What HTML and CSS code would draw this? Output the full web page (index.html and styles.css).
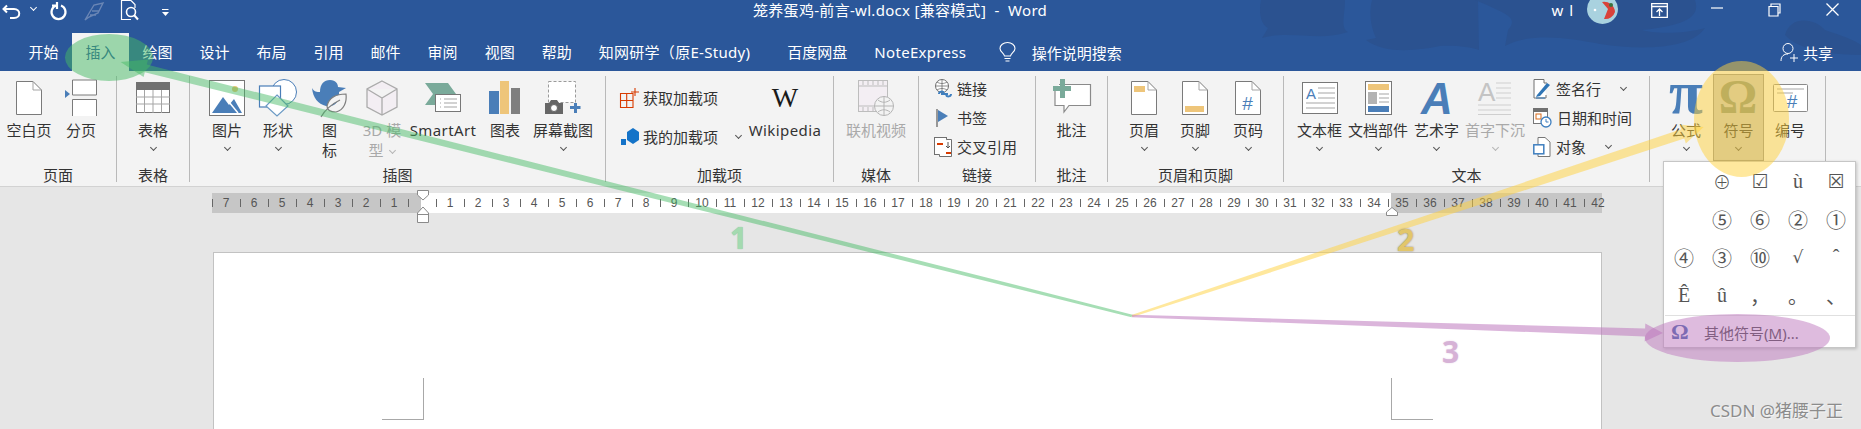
FILE: index.html
```html
<!DOCTYPE html>
<html lang="zh-CN">
<head>
<meta charset="utf-8">
<title>Word</title>
<link rel="stylesheet" href="styles.css">
</head>
<body>
<div class="app">
  <header class="head">
    <svg class="head-bg" width="1861" height="71" viewBox="0 0 1861 71"><path d="M1261 0C1258 15 1262 25 1268 28L1262 38C1290 30 1320 42 1348 32C1340 28 1345 15 1345 0Z"/><path d="M1372 0C1368 15 1372 30 1376 38L1366 40C1385 55 1420 50 1440 46C1455 45 1470 47 1479 50L1478 0Z"/><path d="M1475 0C1510 15 1518 18 1508 30L1505 46C1530 32 1570 38 1600 44C1640 50 1690 50 1705 28C1680 35 1650 33 1642 30C1690 25 1700 15 1695 0Z"/><path d="M1785 35C1790 15 1815 18 1825 30C1840 35 1855 40 1861 45V55C1840 55 1800 52 1785 35Z"/></svg>
    <div class="titlebar">
      <div class="qat">
        <svg class="q-undo" width="20" height="16" viewBox="0 0 20 16"><path d="M5 1.5L1.5 5L5 8.5M2 5H12C19 5 19 14 12 14H8" fill="none" stroke="#fff" stroke-width="2"/></svg>
        <i class="chev chev-w q-c1"></i>
        <svg class="q-redo" width="17" height="18" viewBox="0 0 17 18"><path d="M6 3.5A7 7 0 1 0 11 3.5M7 0V7M2 3.5H7" fill="none" stroke="#fff" stroke-width="2.2"/></svg>
        <svg class="q-pen" width="20" height="18" viewBox="0 0 20 18"><path d="M1 17L10 2L19 0L14 10L5 14ZM8 8H15M6 12H12" fill="none" stroke="#6a86b5" stroke-width="1.4"/></svg>
        <svg class="q-prev" width="19" height="21" viewBox="0 0 19 21"><path d="M11 .5H1.5V19.5H11M11 .5L15 4.5V8" fill="none" stroke="#fff" stroke-width="1.2"/><circle cx="11" cy="12" r="4.5" fill="none" stroke="#fff" stroke-width="1.6"/><path d="M14 15L18 19.5" stroke="#fff" stroke-width="2"/></svg>
        <svg class="q-more" width="7" height="8" viewBox="0 0 7 8"><path d="M0 .5H6.5" stroke="#fff"/><path d="M0 3H7L3.5 7Z" fill="#fff"/></svg>
      </div>
      <div class="doc-title">笼养蛋鸡-前言-wl.docx [兼容模式]&nbsp; -&nbsp; Word</div>
      <div class="win">
        <span class="win-user">w l</span>
        <svg class="win-avatar" width="31" height="24" viewBox="0 0 31 24"><ellipse cx="15.5" cy="9" rx="15.5" ry="15" fill="#a9d2df"/><path d="M15 2A11 11 0 0 1 28 12A10 10 0 0 1 17 19L21 9Z" fill="#d9423a"/><circle cx="24" cy="5" r="2" fill="#39733f"/><circle cx="8" cy="10" r="1.3" fill="#fff"/></svg>
        <svg class="win-disp" width="17" height="15" viewBox="0 0 17 15"><path d="M.7.7H16.3V14.3H.7ZM.7 3.5H16.3M8.5 13V6M5.5 9L8.5 6L11.5 9" fill="none" stroke="#fff" stroke-width="1.3"/></svg>
        <svg class="win-min" width="12" height="8" viewBox="0 0 12 8"><path d="M0 4H12" stroke="#fff" stroke-width="1.2"/></svg>
        <svg class="win-res" width="13" height="14" viewBox="0 0 13 14"><path d="M3 3V1H12V10H10M1 3.5H10V13H1Z" fill="none" stroke="#fff" stroke-width="1.2"/></svg>
        <svg class="win-close" width="13" height="13" viewBox="0 0 13 13"><path d="M.5.5L12.5 12.5M12.5.5L.5 12.5" stroke="#fff" stroke-width="1.3"/></svg>
      </div>
    </div>
    <nav class="tabs">
      <span class="tab">开始</span>
      <span class="tab tab-on">插入</span>
      <span class="tab">绘图</span>
      <span class="tab">设计</span>
      <span class="tab">布局</span>
      <span class="tab">引用</span>
      <span class="tab">邮件</span>
      <span class="tab">审阅</span>
      <span class="tab">视图</span>
      <span class="tab">帮助</span>
      <span class="tab tab-wide">知网研学（原E-Study)</span>
      <span class="tab">百度网盘</span>
      <span class="tab tab-latin">NoteExpress</span>
      <svg class="bulb" width="17" height="20" viewBox="0 0 17 20"><path d="M5.5 14C5 11 1 10 1 6.500A7.500 6 0 0 1 16 6.500C16 10 12 11 11.500 14ZM5.500 16.500H11.500M6.500 19H10.500" fill="none" stroke="#fff" stroke-width="1.100"/></svg>
      <span class="tell">操作说明搜索</span>
      <span class="share">
        <svg width="18" height="19" viewBox="0 0 18 19"><circle cx="8" cy="5.500" r="5" fill="none" stroke="#fff"/><path d="M1 18C1 13 4 11 8 11M10 15H18M14 11V19" fill="none" stroke="#fff"/></svg>
        共享
      </span>
    </nav>
  </header>

  <section class="ribbon">
    <div class="grp grp-page">
      <div class="body cols-page">
        <div class="btn"><span class="ico"><svg width="26" height="34" viewBox="0 0 26 34"><path class="pg" d="M.5.5H17L25.500 9V33.500H.5Z"/><path class="ln" d="M17 .5V9H25.500"/></svg></span><span class="lbl">空白页</span></div>
        <div class="btn"><span class="ico"><svg width="32" height="36" viewBox="0 0 32 36"><path class="pg" d="M7.500 0V15H31.500V0ZM7.500 36V19.500H31.500V36"/><path d="M0 10V18L5 14Z" fill="#4a7eb8"/></svg></span><span class="lbl">分页</span></div>
      </div>
      <div class="glabel">页面</div>
    </div>
    <div class="grp grp-table">
      <div class="body">
        <div class="btn"><span class="ico"><svg width="34" height="32" viewBox="0 0 34 32"><rect x=".5" y=".5" width="33" height="30" fill="#fff" stroke="#777"/><rect width="34" height="8" fill="#707070"/><path class="ln" d="M0 15H34M0 22H34M8.500 8V31M17 8V31M25.500 8V31"/></svg></span><span class="lbl">表格</span><i class="chev"></i></div>
      </div>
      <div class="glabel">表格</div>
    </div>
    <div class="grp grp-illus">
      <div class="body cols-illus">
        <div class="btn"><span class="ico"><svg width="36" height="36" viewBox="0 0 36 36"><rect x=".5" y=".5" width="35" height="35" fill="#fff" stroke="#777"/><path d="M3 33L14 17L20 25L25 19L33 33Z" fill="#4a7eb8"/><path d="M20 22L29 33" stroke="#fff" stroke-width="1.500"/><circle cx="26" cy="9" r="3" fill="#f0c674"/></svg></span><span class="lbl">图片</span><i class="chev"></i></div>
        <div class="btn"><span class="ico"><svg width="38" height="38" viewBox="0 0 38 38"><circle cx="25" cy="13" r="12.500" fill="#fff" stroke="#4a7eb8"/><rect x=".5" y="7" width="21" height="21" fill="#fff" stroke="#4a7eb8" stroke-width="1.200"/><path d="M18 16L29 27L18 37L7 27Z" fill="#fff" stroke="#6b9ac4" stroke-width="1.200"/></svg></span><span class="lbl">形状</span><i class="chev"></i></div>
        <div class="btn"><span class="ico"><svg width="36" height="40" viewBox="0 0 36 40"><path d="M0 10C2 14 5 14 8 14C8 6 12 2 18 2C24 2 26 6 26 9L34 10L27 14C28 24 22 30 14 28C6 26 1 20 0 10Z" fill="#4a7eb8"/><path d="M34 16C24 16 17 20 15 28C15 32 18 34 24 34C32 32 35 24 34 16ZM9 39C14 30 20 26 28 22" fill="#f3f3f3" stroke="#7f7f7f" stroke-width="1.200"/></svg></span><span class="lbl lbl-wrap">图<br>标</span></div>
        <div class="btn btn-off"><span class="ico"><svg width="32" height="36" viewBox="0 0 32 36"><path d="M16 1L31 9V27L16 35L1 27V9ZM1 9L16 18L31 9M16 18V35" fill="#f3eef3" stroke="#ababab" stroke-width="1.300"/></svg></span><span class="lbl lbl-wrap">3D 模<br>型 <i class="chev chev-in"></i></span></div>
        <div class="btn"><span class="ico"><svg width="38" height="30" viewBox="0 0 38 30"><path d="M1 0H24L32 11L24 22H1L9 11Z" fill="#7aaa9a"/><rect x="11.500" y="11.500" width="25" height="17" fill="#fff" stroke="#777"/><path class="ln" d="M16 16H17M16 20H17M16 24H17M20 16H33M20 20H33M20 24H33"/></svg></span><span class="lbl lbl-latin">SmartArt</span></div>
        <div class="btn"><span class="ico"><svg width="32" height="34" viewBox="0 0 32 34"><rect y="10" width="10" height="23" fill="#4a7eb8"/><rect x="11" width="9" height="33" fill="#eec57a"/><rect x="22" y="7" width="9" height="26" fill="#7f7f7f"/></svg></span><span class="lbl">图表</span></div>
        <div class="btn"><span class="ico"><svg width="36" height="34" viewBox="0 0 36 34"><rect x="3.500" y=".5" width="27" height="21" fill="#fff" stroke="#9a9a9a" stroke-dasharray="3 2"/><path d="M0 33V22H4L6 19H12L14 22H18V33Z" fill="#666"/><circle cx="9" cy="27" r="3.500" fill="#fff" stroke="#666"/><path d="M25 26.500H35.500M30.500 22V32" stroke="#4a7eb8" stroke-width="3"/></svg></span><span class="lbl">屏幕截图</span><i class="chev"></i></div>
      </div>
      <div class="glabel">插图</div>
    </div>
    <div class="grp grp-addin">
      <div class="body cols-addin">
        <div class="small small-addin">
          <div class="row"><svg width="20" height="20" viewBox="0 0 20 20"><path d="M.5 5.500H13V19.500H.5ZM.5 12.500H13M6.700 5.500V19.500M15 0V8M11 4H19" fill="none" stroke="#d83b01" stroke-width="1.100"/></svg><span>获取加载项</span></div>
          <div class="row"><svg width="20" height="20" viewBox="0 0 20 20"><path d="M7 5L13 1L19 5V13L13 17L7 13Z" fill="#1473c8"/><path d="M1 12H6V18H1Z" fill="#1473c8"/></svg><span>我的加载项</span><i class="chev chev-row"></i></div>
        </div>
        <div class="btn"><span class="ico"><span class="wiki">W</span></span><span class="lbl lbl-latin">Wikipedia</span></div>
      </div>
      <div class="glabel">加载项</div>
    </div>
    <div class="grp grp-media">
      <div class="body">
        <div class="btn btn-off"><span class="ico"><svg width="36" height="36" viewBox="0 0 36 36"><rect x=".5" y=".5" width="29" height="31" fill="#f3eef3" stroke="#bdbdbd"/><path d="M.5 6H29.500M.5 26H29.500M5 1V5M10 1V5M15 1V5M20 1V5M25 1V5M5 27V31M10 27V31M15 27V31M20 27V31" stroke="#bdbdbd" fill="none"/><circle cx="26" cy="26" r="9.500" fill="#f3f3f3" stroke="#b5b5b5"/><path d="M16.500 26H35.500M26 16.500V35.500M20 20C24 23 28 23 32 20M20 32C24 29 28 29 32 32" fill="none" stroke="#b5b5b5"/></svg></span><span class="lbl">联机视频</span></div>
      </div>
      <div class="glabel">媒体</div>
    </div>
    <div class="grp grp-link">
      <div class="body">
        <div class="small small-link">
          <div class="row"><svg width="18" height="20" viewBox="0 0 18 20"><circle cx="8" cy="7" r="6.500" fill="#fff" stroke="#707070"/><path d="M1.500 7H14.500M8 .5V13.500M3 3C6 5 10 5 13 3M3 11C6 9 10 9 13 11" fill="none" stroke="#707070" stroke-width=".8"/><path d="M5 15C5 12 9 12 10 14M17 15C17 18 13 18 12 16M7 15H14" fill="none" stroke="#3f7fbf" stroke-width="2"/></svg><span>链接</span></div>
          <div class="row"><svg width="18" height="20" viewBox="0 0 18 20"><path d="M3 1V19" stroke="#707070" stroke-width="1.400"/><path d="M4 2L14 8L4 14Z" fill="#4a7eb8"/></svg><span>书签</span></div>
          <div class="row"><svg width="18" height="20" viewBox="0 0 18 20"><rect x=".5" y=".5" width="12" height="17" fill="#fff" stroke="#707070"/><path d="M12.500 2.500H17.500V19.500H5.500V17.500" fill="#fff" stroke="#707070"/><path d="M3 7H9" stroke="#d83b01" stroke-width="2"/><path d="M12 16H17" stroke="#d83b01" stroke-width="2"/><path d="M14 5V11M12 9L14 11L16 9" fill="none" stroke="#555"/></svg><span>交叉引用</span></div>
        </div>
      </div>
      <div class="glabel">链接</div>
    </div>
    <div class="grp grp-comment">
      <div class="body">
        <div class="btn"><span class="ico"><svg width="38" height="38" viewBox="0 0 38 38"><path d="M6 5.500H37.500V26.500H16L11 33V26.500H2V10" fill="#fff" stroke="#8a8a8a" stroke-width="1.200"/><path d="M7 0H12V7H18V12H12V19H7V12H0V7H7Z" fill="#7aaa9a"/></svg></span><span class="lbl">批注</span></div>
      </div>
      <div class="glabel">批注</div>
    </div>
    <div class="grp grp-hf">
      <div class="body cols-hf">
        <div class="btn"><span class="ico"><svg width="26" height="34" viewBox="0 0 26 34"><path class="pg" d="M.5.5H17L25.500 9V33.500H.5Z"/><path class="ln" d="M17 .5V9H25.500"/><rect x="3" y="5" width="11" height="6" fill="#eec57a"/></svg></span><span class="lbl">页眉</span><i class="chev"></i></div>
        <div class="btn"><span class="ico"><svg width="26" height="34" viewBox="0 0 26 34"><path class="pg" d="M.5.5H17L25.500 9V33.500H.5Z"/><path class="ln" d="M17 .5V9H25.500"/><rect x="3" y="25" width="19" height="6" fill="#eec57a"/></svg></span><span class="lbl">页脚</span><i class="chev"></i></div>
        <div class="btn"><span class="ico"><svg width="26" height="34" viewBox="0 0 26 34"><path class="pg" d="M.5.5H17L25.500 9V33.500H.5Z"/><path class="ln" d="M17 .5V9H25.500"/><text x="12.500" y="29" class="glyph-hash">#</text></svg></span><span class="lbl">页码</span><i class="chev"></i></div>
      </div>
      <div class="glabel">页眉和页脚</div>
    </div>
    <div class="grp grp-text">
      <div class="body cols-text">
        <div class="btn"><span class="ico"><svg width="36" height="32" viewBox="0 0 36 32"><rect x=".5" y=".5" width="35" height="31" fill="#fff" stroke="#777"/><text x="4" y="17" class="glyph-a">A</text><path class="ln" d="M16 6H33M16 11H33M16 16H33M4 21H33M4 26H33"/></svg></span><span class="lbl">文本框</span><i class="chev"></i></div>
        <div class="btn"><span class="ico"><svg width="27" height="34" viewBox="0 0 27 34"><rect x=".5" y=".5" width="26" height="33" fill="#fff" stroke="#777"/><rect x="3" y="3" width="21" height="6" fill="#eec57a"/><rect x="3" y="11" width="9" height="12" fill="#b3b3b3"/><path class="ln" d="M14 13H24M14 17H24M14 21H24"/><rect x="3" y="25" width="21" height="6" fill="#4a7eb8"/></svg></span><span class="lbl">文档部件</span><i class="chev"></i></div>
        <div class="btn"><span class="ico"><svg width="40" height="36" viewBox="0 0 40 36"><text x="20" y="34" class="glyph-art">A</text></svg></span><span class="lbl">艺术字</span><i class="chev"></i></div>
        <div class="btn btn-off"><span class="ico"><svg width="34" height="34" viewBox="0 0 34 34"><text x="0" y="20" class="glyph-cap">A</text><path d="M18 2H33M18 7H33M18 12H33M18 17H33M0 24H33M0 29H33M0 33.500H33" stroke="#cfcfcf" fill="none"/></svg></span><span class="lbl">首字下沉</span><i class="chev"></i></div>
        <div class="small small-text">
          <div class="row"><svg width="18" height="20" viewBox="0 0 18 20"><path d="M11 .5H1V19H13V16" fill="#fff" stroke="#707070"/><path d="M11 .5V4H14" fill="none" stroke="#707070"/><path d="M4 16L14 4L17 6L7 17L3 18Z" fill="#2f75b5"/><path d="M3 19H12" stroke="#2f75b5"/></svg><span>签名行</span><i class="chev chev-row"></i></div>
          <div class="row"><svg width="19" height="20" viewBox="0 0 19 20"><rect x=".5" y=".5" width="14" height="15" fill="#fff" stroke="#777"/><rect x="0" y="0" width="15" height="4" fill="#707070"/><rect x="3" y="6" width="5" height="5" fill="none" stroke="#d86b1a"/><circle cx="13" cy="14" r="5" fill="#fff" stroke="#3f7fbf" stroke-width="1.300"/><path d="M13 11V14H15.500" fill="none" stroke="#3f7fbf"/></svg><span>日期和时间</span></div>
          <div class="row"><svg width="18" height="20" viewBox="0 0 18 20"><path d="M5 .5H12L17 5V19.500H5Z" fill="#fff" stroke="#777"/><rect x=".8" y="7.800" width="10" height="9" fill="#fff" stroke="#3f7fbf" stroke-width="1.500"/></svg><span>对象</span><i class="chev chev-row"></i></div>
        </div>
      </div>
      <div class="glabel">文本</div>
    </div>
    <div class="grp grp-sym">
      <div class="body cols-sym">
        <div class="btn"><span class="ico"><svg width="40" height="38" viewBox="0 0 40 38"><text x="20" y="34" class="glyph-pi">π</text></svg></span><span class="lbl">公式</span><i class="chev"></i></div>
        <div class="btn btn-sel"><span class="ico"><svg width="40" height="36" viewBox="0 0 40 36"><text x="19" y="33" class="glyph-om">Ω</text></svg></span><span class="lbl">符号</span><i class="chev"></i></div>
        <div class="btn"><span class="ico"><svg width="35" height="28" viewBox="0 0 35 28"><rect x=".5" y=".5" width="34" height="27" rx="1" fill="#fff" stroke="#8a8a8a"/><path class="ln" d="M4 5H31M4 9H20"/><text x="19" y="24" class="glyph-hash">#</text></svg></span><span class="lbl">编号</span></div>
      </div>
    </div>
  </section>

  <main class="work">
    <div class="ruler">
      <span class="rc">7</span><span class="rc">6</span><span class="rc">5</span><span class="rc">4</span><span class="rc">3</span><span class="rc">2</span><span class="rc">1</span><span class="rc"></span>
      <span class="rc">1</span><span class="rc">2</span><span class="rc">3</span><span class="rc">4</span><span class="rc">5</span><span class="rc">6</span><span class="rc">7</span><span class="rc">8</span><span class="rc">9</span><span class="rc">10</span><span class="rc">11</span><span class="rc">12</span><span class="rc">13</span><span class="rc">14</span><span class="rc">15</span><span class="rc">16</span><span class="rc">17</span><span class="rc">18</span><span class="rc">19</span><span class="rc">20</span><span class="rc">21</span><span class="rc">22</span><span class="rc">23</span><span class="rc">24</span><span class="rc">25</span><span class="rc">26</span><span class="rc">27</span><span class="rc">28</span><span class="rc">29</span><span class="rc">30</span><span class="rc">31</span><span class="rc">32</span><span class="rc">33</span><span class="rc">34</span><span class="rc">35</span><span class="rc">36</span><span class="rc">37</span><span class="rc">38</span><span class="rc">39</span><span class="rc">40</span><span class="rc">41</span><span class="rc">42</span>
      <svg class="mark-left" width="12" height="33" viewBox="0 0 12 33"><path d="M.5.5H11.500V5L6 10L.5 5Z" fill="#fff" stroke="#8a8a8a"/><path d="M6 17L11.500 23V32.500H.5V23ZM.5 24.500H11.500" fill="#fff" stroke="#8a8a8a"/></svg>
      <svg class="mark-right" width="12" height="9" viewBox="0 0 12 9"><path d="M6 .5L11.500 5V8.500H.5V5Z" fill="#fff" stroke="#8a8a8a"/></svg>
    </div>
    <div class="page">
      <i class="crop crop-l"></i>
      <i class="crop crop-r"></i>
    </div>
  </main>

  <div class="menu">
    <div class="sym-grid">
      <span></span><span class="s-o">⊕</span><span class="s-d s-box">☑</span><span class="s-r">ù</span><span class="s-d s-box">☒</span>
      <span></span><span class="s-c">⑤</span><span class="s-c">⑥</span><span class="s-c">②</span><span class="s-c">①</span>
      <span class="s-c">④</span><span class="s-c">③</span><span class="s-c">⑩</span><span class="s-d">√</span><span class="s-r">ˆ</span>
      <span class="s-r">Ê</span><span class="s-r">û</span><span class="s-c">，</span><span class="s-c">。</span><span class="s-c">、</span>
    </div>
    <div class="menu-foot"><span class="menu-om">Ω</span><span class="menu-txt">其他符号(<u>M</u>)...</span></div>
  </div>

  <svg class="notes" width="1861" height="429" viewBox="0 0 1861 429">
    <ellipse class="n-g" cx="109" cy="57.500" rx="44" ry="23.500"/>
    <polygon class="n-g2" points="1132.500,314.700 146.800,64.400 148,59.600 120.600,62 143.600,77 144.800,72.200 1131.500,317.300"/>
    <ellipse class="n-y" cx="1741.500" cy="119" rx="47.500" ry="58"/>
    <polygon class="n-y2" points="1131.500,315 1681.100,129.200 1679.600,124.400 1703.600,127 1685.800,143.400 1684.300,138.600 1132.500,317"/>
    <ellipse class="n-p" cx="1737.500" cy="338" rx="92.500" ry="24"/>
    <polygon class="n-p2" points="1132,314.800 1645.100,328.400 1645.300,323.400 1663,333 1644.700,341.400 1644.900,336.400 1132,317.200"/>
  </svg>
  <span class="num num-1">1</span>
  <span class="num num-2">2</span>
  <span class="num num-3">3</span>
  <span class="mark">CSDN @猪腰子正</span>
</div>
</body>
</html>
```
FILE: styles.css
```css
* { box-sizing: border-box; }
html, body { margin: 0; padding: 0; }
body {
  width: 1861px;
  height: 429px;
  overflow: hidden;
  background: #e6e6e6;
  font-family: "Noto Sans", "Noto Sans CJK SC", sans-serif;
  font-size: 15px;
  color: #333;
}
.app { position: relative; width: 1861px; height: 429px; overflow: hidden; }
i { font-style: normal; display: block; }
svg { overflow: visible; flex: none; }

/* header */
.head { position: relative; height: 71px; background: #2b579a; color: #fff; }
.head-bg { position: absolute; left: 0; top: 0; fill: #2b5290; }
.titlebar { position: relative; height: 33px; display: grid; grid-template-columns: 753px auto 1fr; }
.qat { display: flex; align-items: flex-start; }
.q-undo { margin: 4px 0 0 2px; }
.q-c1 { margin: 6px 0 0 9px; }
.q-redo { margin: 2px 0 0 14px; }
.q-pen { margin: 3px 0 0 17px; }
.q-prev { margin: 0 0 0 16px; }
.q-more { margin: 9px 0 0 23px; }
.doc-title { line-height: 20px; white-space: nowrap; letter-spacing: .3px; }
.win { display: flex; align-items: flex-start; justify-content: flex-end; padding-right: 22px; }
.win-user { line-height: 20px; margin-right: 13px; letter-spacing: 1px; }
.win-disp { margin: 3px 0 0 33px; }
.win-min { margin: 4px 0 0 43px; }
.win-res { margin: 3px 0 0 45px; }
.win-close { margin: 3px 0 0 45px; }
.tabs { position: relative; height: 38px; display: flex; align-items: center; padding-left: 15px; white-space: nowrap; }
.tab { height: 38px; line-height: 38px; padding: 0 13.5px; }
.tab-on { background: #f3f3f3; color: #2b579a; }
.tab-wide { margin-right: 10px; letter-spacing: .3px; }
.tab-latin { letter-spacing: .3px; }
.bulb { margin: 0 16px 0 19px; }
.share { margin-left: auto; padding-right: 28px; display: flex; align-items: center; gap: 5px; }

/* ribbon */
.ribbon { height: 116px; padding-top: 5px; display: flex; background: #f3f3f3; border-bottom: 1px solid #d2d2d2; }
.grp { height: 106px; flex: none; display: flex; flex-direction: column; border-right: 1px solid #b9b9b9; }
.grp-page { width: 117px; }
.grp-table { width: 73px; }
.grp-illus { width: 416px; }
.grp-addin { width: 228px; }
.grp-media { width: 85px; }
.grp-link { width: 117px; }
.grp-comment { width: 72px; }
.grp-hf { width: 176px; }
.grp-text { width: 366px; }
.grp-sym { width: 176px; }
.body { flex: 1; display: grid; min-height: 0; }
.glabel { line-height: 14px; text-align: center; white-space: nowrap; }
.cols-page { padding-left: 6px; grid-template-columns: 46px 58px; }
.cols-illus { padding-left: 14px; grid-template-columns: 46px 56px 47px 58px 64px 60px 56px; }
.cols-addin { grid-template-columns: 143px 72px; }
.cols-hf { padding-left: 10px; grid-template-columns: 52px 50px 56px; }
.cols-text { padding-left: 6px; grid-template-columns: 59px 58px 59px 58px 1fr; }
.cols-sym { padding-left: 9px; grid-template-columns: 54px 51px 52px; }
.btn { display: flex; flex-direction: column; align-items: center; min-width: 0; }
.ico { height: 44px; width: 100%; display: flex; align-items: center; justify-content: center; flex: none; }
.lbl { line-height: 20px; white-space: nowrap; text-align: center; }
.lbl-wrap { line-height: 20px; }
.lbl-latin { letter-spacing: .4px; }
.btn-off { color: #a9a9a9; }
.btn-off .chev { border-color: #b5b5b5; }
.btn-sel { height: 87px; margin-top: -2px; padding-top: 1px; background: #c6c6c6; border: 1px solid #8f8f8f; }
.chev { width: 5px; height: 5px; margin-top: 5px; border-right: 1px solid #555; border-bottom: 1px solid #555; transform: rotate(45deg); }
.chev-w { border-color: #fff; }
.chev-in { display: inline-block; margin: 0 0 3px 3px; vertical-align: middle; }
.chev-row { margin: -3px 0 0 15px; }
.pg { fill: #fff; stroke: #7a7a7a; }
.ln { fill: none; stroke: #a5a5a5; }
.glyph-hash { font-family: "Liberation Sans", sans-serif; font-size: 19px; fill: #4a7eb8; text-anchor: middle; }
.glyph-a { font-family: "Liberation Sans", sans-serif; font-size: 15px; fill: #4a7eb8; }
.glyph-cap { font-family: "Liberation Sans", sans-serif; font-size: 26px; fill: #c4c4c4; }
.glyph-art { font-family: "Liberation Sans", sans-serif; font-style: italic; font-weight: 700; font-size: 44px; fill: #4a7eb8; text-anchor: middle; }
.glyph-pi { font-family: "Liberation Serif", serif; font-weight: 700; font-size: 62px; fill: #4a7eb8; text-anchor: middle; }
.glyph-om { font-family: "Liberation Serif", serif; font-weight: 700; font-size: 48px; fill: #7f8c7c; text-anchor: middle; }
.wiki { font-family: "Liberation Serif", serif; font-size: 28px; color: #1a1a1a; line-height: 28px; }
.small { display: grid; grid-auto-rows: 29px; }
.small-addin { padding-left: 14px; grid-auto-rows: 39px; margin-top: 2px; }
.small-link { padding-left: 15px; margin-top: -2px; }
.small-text { padding-left: 9px; margin-top: -2px; }
.row { display: flex; align-items: center; gap: 5px; white-space: nowrap; }
.small-addin .row { gap: 3px; }

/* workspace */
.work { padding-top: 6px; }
.ruler {
  position: relative;
  margin-left: 212px;
  width: 1390px;
  height: 20px;
  display: flex;
  background: linear-gradient(90deg, #c6c6c6 209px, #fff 209px, #fff 1179px, #c6c6c6 1179px);
  font-family: "Liberation Sans", sans-serif;
  font-size: 12px;
  color: #555;
}
.rc {
  flex: none;
  width: 28px;
  line-height: 21px;
  text-align: center;
  background: linear-gradient(#666, #666) left center / 1px 8px no-repeat;
}
.mark-left { position: absolute; left: 205px; top: -3px; }
.mark-right { position: absolute; left: 1174px; top: 14px; }
.page {
  margin: 39px 0 0 213px;
  width: 1389px;
  height: 220px;
  padding: 125px 168px 0;
  display: flex;
  justify-content: space-between;
  align-items: flex-start;
  background: #fff;
  border: 1px solid #c2c2c2;
}
.crop { width: 42px; height: 42px; border-bottom: 1px solid #a8a8a8; }
.crop-l { border-right: 1px solid #a8a8a8; }
.crop-r { border-left: 1px solid #a8a8a8; }

/* symbol menu */
.menu {
  position: absolute;
  left: 1663px;
  top: 161px;
  width: 193px;
  height: 187px;
  background: #fff;
  border: 1px solid #c6c6c6;
  box-shadow: 1px 1px 3px rgba(0,0,0,.2);
  padding-left: 1px;
}
.sym-grid { display: grid; grid-template-columns: repeat(5, 38px); grid-auto-rows: 38px; }
.sym-grid span { display: flex; align-items: center; justify-content: center; color: #555; }
.s-c { font-family: "Noto Sans CJK SC", sans-serif; font-size: 20px; }
.s-o { font-family: "Noto Sans CJK SC", sans-serif; font-size: 18px; font-weight: 300; }
.s-d { font-family: "DejaVu Sans", sans-serif; font-size: 17px; }
.s-box { font-size: 19px; }
.s-r { font-family: "Liberation Serif", serif; font-size: 20px; }
.menu-foot { height: 33px; border-top: 1px solid #e0e0e0; display: flex; align-items: center; margin-top: 1px; }
.menu-om { font-family: "Liberation Serif", serif; font-weight: 700; font-size: 22px; line-height: 24px; color: #3c5fa8; margin-left: 6px; width: 33px; }
.menu-txt { color: #444; }

/* annotations */
.notes { position: absolute; left: 0; top: 0; pointer-events: none; }
.n-g { fill: rgb(70,185,100); fill-opacity: .5; }
.n-g2 { fill: rgb(70,185,100); fill-opacity: .48; }
.n-y { fill: rgb(255,210,60); fill-opacity: .5; }
.n-y2 { fill: rgb(255,210,60); fill-opacity: .5; }
.n-p { fill: rgb(190,120,190); fill-opacity: .5; }
.n-p2 { fill: rgb(190,120,190); fill-opacity: .55; }
.num { position: absolute; font-family: "Open Sans", sans-serif; font-weight: 700; font-size: 30px; line-height: 30px; }
.num-1 { left: 730px; top: 223px; color: #a4dab0; text-shadow: 0 0 1px #7fb98e; }
.num-2 { left: 1397px; top: 225px; color: #e2c66a; text-shadow: 0 0 2px #8a7a50; }
.num-3 { left: 1442px; top: 337px; color: #d6b2d6; text-shadow: 0 0 2px #e8d6e8; }
.mark { position: absolute; left: 1710px; top: 399px; font-size: 17px; line-height: 24px; color: #8c8c8c; text-shadow: 1px 1px 1px #f6f6f6; white-space: nowrap; }
```
